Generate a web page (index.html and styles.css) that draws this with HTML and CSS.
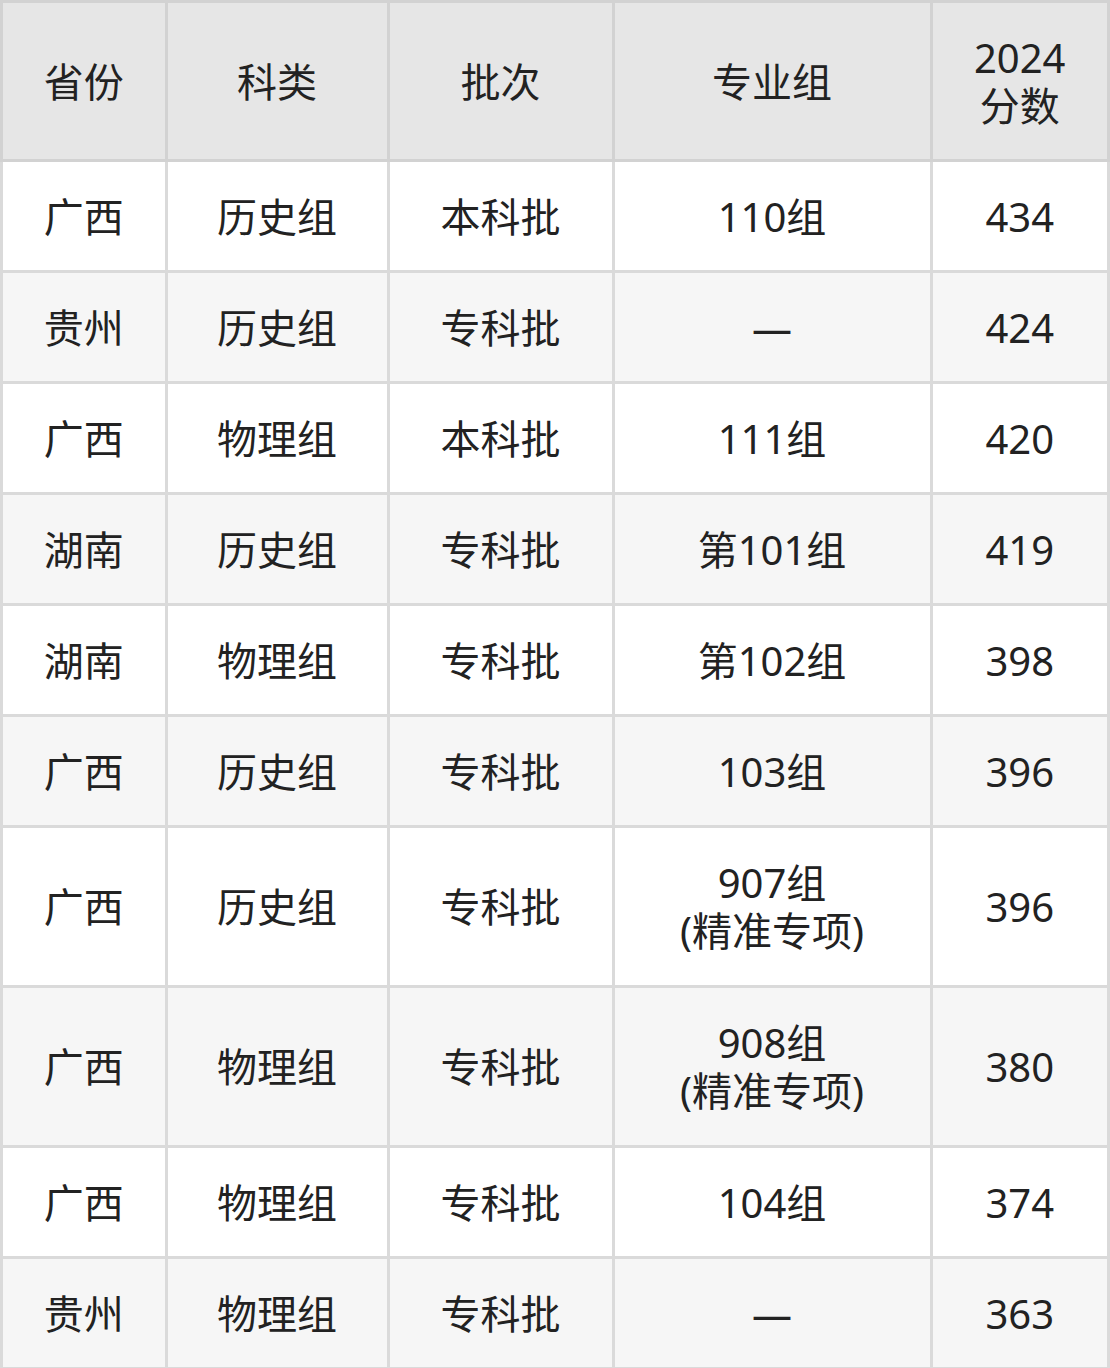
FILE: index.html
```html
<!DOCTYPE html>
<html lang="zh-CN">
<head>
<meta charset="utf-8">
<title>2024分数</title>
<link rel="stylesheet" href="styles.css">
</head>
<body>
<table class="score-table">
  <colgroup>
    <col class="c1"><col class="c2"><col class="c3"><col class="c4"><col class="c5">
  </colgroup>
  <thead>
    <tr class="head">
      <th>省份</th><th>科类</th><th>批次</th><th>专业组</th><th>2024<br>分数</th>
    </tr>
  </thead>
  <tbody>
    <tr class="r"><td>广西</td><td>历史组</td><td>本科批</td><td>110组</td><td>434</td></tr>
    <tr class="r alt"><td>贵州</td><td>历史组</td><td>专科批</td><td>—</td><td>424</td></tr>
    <tr class="r"><td>广西</td><td>物理组</td><td>本科批</td><td>111组</td><td>420</td></tr>
    <tr class="r alt"><td>湖南</td><td>历史组</td><td>专科批</td><td>第101组</td><td>419</td></tr>
    <tr class="r"><td>湖南</td><td>物理组</td><td>专科批</td><td>第102组</td><td>398</td></tr>
    <tr class="r alt"><td>广西</td><td>历史组</td><td>专科批</td><td>103组</td><td>396</td></tr>
    <tr class="r tall"><td>广西</td><td>历史组</td><td>专科批</td><td>907组<br>(精准专项)</td><td>396</td></tr>
    <tr class="r tall alt"><td>广西</td><td>物理组</td><td>专科批</td><td>908组<br>(精准专项)</td><td>380</td></tr>
    <tr class="r"><td>广西</td><td>物理组</td><td>专科批</td><td>104组</td><td>374</td></tr>
    <tr class="r alt"><td>贵州</td><td>物理组</td><td>专科批</td><td>—</td><td>363</td></tr>
  </tbody>
</table>
</body>
</html>
```
FILE: styles.css
```css
html, body {
  margin: 0;
  padding: 0;
  background: #ffffff;
}
.score-table {
  width: 1110px;
  table-layout: fixed;
  border-collapse: collapse;
  font-family: "Noto Sans", "Noto Sans CJK SC", sans-serif;
  font-size: 40px;
  line-height: 48px;
  color: #222222;
}
.c1 { width: 164.5px; }
.c2 { width: 222px; }
.c3 { width: 225px; }
.c4 { width: 318px; }
.c5 { width: 177.5px; }
.score-table th,
.score-table td {
  border: 3px solid #dadada;
  padding: 1px 0 0 0;
  text-align: center;
  vertical-align: middle;
  font-weight: 400;
}
.head th {
  background: #e6e6e6;
  height: 155px;
  border-color: #d2d2d2;
}
.r td {
  height: 107px;
  background: #ffffff;
}
.r.alt td {
  background: #f6f6f6;
}
.r.tall td {
  height: 156px;
}
```
